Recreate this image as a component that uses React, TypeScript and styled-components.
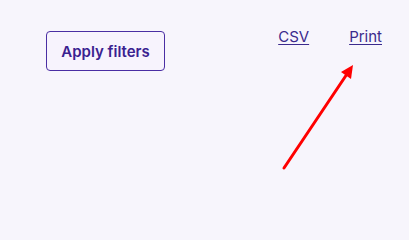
import React from "react";
import styled, { createGlobalStyle } from "styled-components";

const Global = createGlobalStyle`
  html, body { margin: 0; padding: 0; background: #f7f5fc; min-height: 100%; }
  body { font-family: Inter, "Noto Sans", "Liberation Sans", sans-serif; }
`;

const Page = styled.div`
  position: relative;
  width: 409px;
  height: 220px;
  box-sizing: border-box;
  padding: 31px 27px 0 46px;
  display: flex;
  justify-content: space-between;
  align-items: flex-start;
`;

const FilterButton = styled.button`
  height: 40px;
  width: 119px;
  box-sizing: border-box;
  border: 1px solid #4a2ea3;
  border-radius: 4px;
  background: #f7f3fd;
  color: #3a2190;
  font-family: Inter, "Noto Sans", sans-serif;
  font-size: 15px;
  font-weight: 600;
  padding: 0;
  cursor: pointer;
`;

const Links = styled.nav`
  display: flex;
  gap: 40px;
  margin-top: -3px;
`;

const ExportLink = styled.a`
  color: #3b2a8c;
  font-size: 15px;
  line-height: 18px;
  text-decoration: underline;
  text-underline-offset: 2px;
  cursor: pointer;
`;

const Overlay = styled.svg`
  position: absolute;
  left: 0;
  top: 0;
  pointer-events: none;
`;

export default function App() {
  return (
    <>
      <Global />
      <Page>
        <FilterButton>Apply filters</FilterButton>
        <Links>
          <ExportLink>CSV</ExportLink>
          <ExportLink>Print</ExportLink>
        </Links>
        <Overlay width="409" height="220" viewBox="0 0 409 220">
          <line x1="284" y1="168" x2="347" y2="74" stroke="#ff0000" strokeWidth="3" strokeLinecap="round" />
          <polygon points="353,65 351,79 341,72" fill="#ff0000" />
        </Overlay>
      </Page>
    </>
  );
}
